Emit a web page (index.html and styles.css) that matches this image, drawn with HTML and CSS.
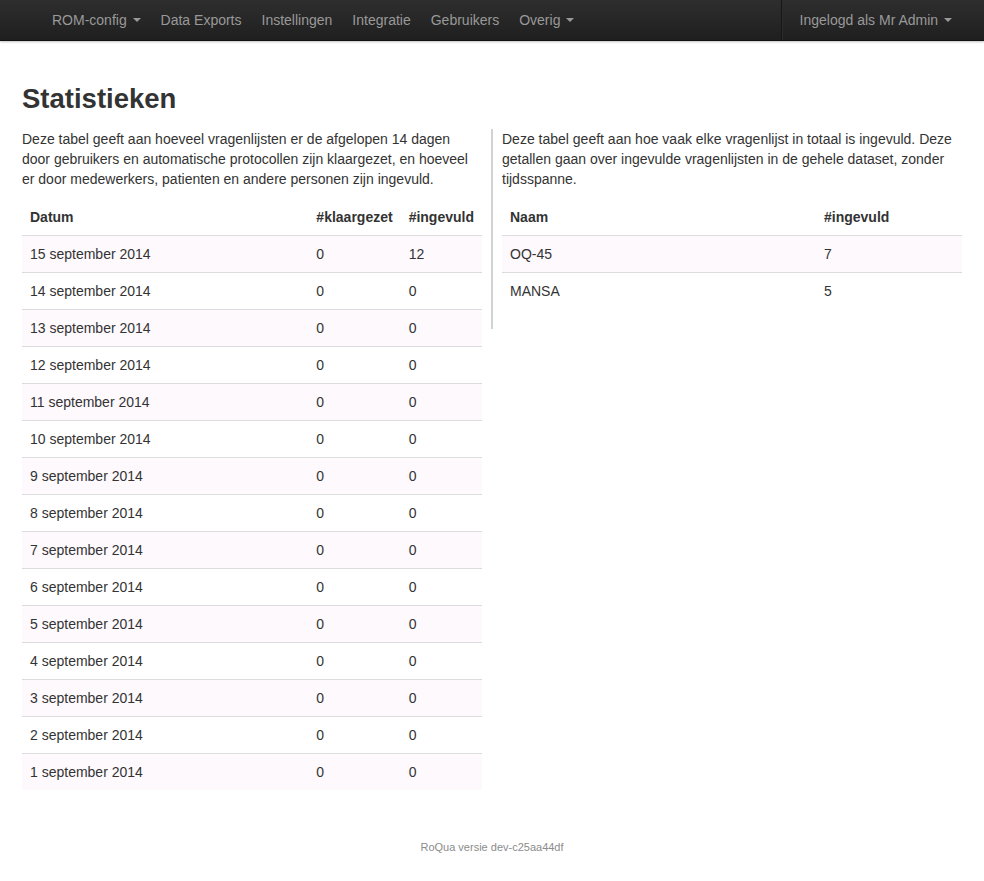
FILE: index.html
```html
<!DOCTYPE html>
<html lang="nl">
<head>
<meta charset="utf-8">
<title>Statistieken</title>
<link rel="stylesheet" href="styles.css">
</head>
<body>
<header class="navbar">
  <ul class="nav">
    <li><a href="#">ROM-config <span class="caret"></span></a></li>
    <li><a href="#">Data Exports</a></li>
    <li><a href="#">Instellingen</a></li>
    <li><a href="#">Integratie</a></li>
    <li><a href="#">Gebruikers</a></li>
    <li><a href="#">Overig <span class="caret"></span></a></li>
  </ul>
  <ul class="nav nav-right">
    <li class="user"><a href="#">Ingelogd als Mr Admin <span class="caret"></span></a></li>
  </ul>
</header>

<main class="main">
  <h1 class="title">Statistieken</h1>
  <div class="columns">
    <section class="col col-left">
      <p class="intro">Deze tabel geeft aan hoeveel vragenlijsten er de afgelopen 14 dagen door gebruikers en automatische protocollen zijn klaargezet, en hoeveel er door medewerkers, patienten en andere personen zijn ingevuld.</p>
      <table class="table">
        <thead>
          <tr><th>Datum</th><th class="shrink">#klaargezet</th><th class="shrink">#ingevuld</th></tr>
        </thead>
        <tbody>
          <tr><td>15 september 2014</td><td>0</td><td>12</td></tr>
          <tr><td>14 september 2014</td><td>0</td><td>0</td></tr>
          <tr><td>13 september 2014</td><td>0</td><td>0</td></tr>
          <tr><td>12 september 2014</td><td>0</td><td>0</td></tr>
          <tr><td>11 september 2014</td><td>0</td><td>0</td></tr>
          <tr><td>10 september 2014</td><td>0</td><td>0</td></tr>
          <tr><td>9 september 2014</td><td>0</td><td>0</td></tr>
          <tr><td>8 september 2014</td><td>0</td><td>0</td></tr>
          <tr><td>7 september 2014</td><td>0</td><td>0</td></tr>
          <tr><td>6 september 2014</td><td>0</td><td>0</td></tr>
          <tr><td>5 september 2014</td><td>0</td><td>0</td></tr>
          <tr><td>4 september 2014</td><td>0</td><td>0</td></tr>
          <tr><td>3 september 2014</td><td>0</td><td>0</td></tr>
          <tr><td>2 september 2014</td><td>0</td><td>0</td></tr>
          <tr><td>1 september 2014</td><td>0</td><td>0</td></tr>
        </tbody>
      </table>
    </section>
    <section class="col col-right">
      <p class="intro">Deze tabel geeft aan hoe vaak elke vragenlijst in totaal is ingevuld. Deze getallen gaan over ingevulde vragenlijsten in de gehele dataset, zonder tijdsspanne.</p>
      <table class="table">
        <thead>
          <tr><th class="name-col">Naam</th><th>#ingevuld</th></tr>
        </thead>
        <tbody>
          <tr><td>OQ-45</td><td>7</td></tr>
          <tr><td>MANSA</td><td>5</td></tr>
        </tbody>
      </table>
    </section>
  </div>
</main>

<footer class="footer">RoQua versie dev-c25aa44df</footer>
</body>
</html>
```
FILE: styles.css
```css
* { box-sizing: border-box; }

html, body {
  margin: 0;
  padding: 0;
}

body {
  font-family: "Liberation Sans", Arial, Helvetica, sans-serif;
  font-size: 14px;
  line-height: 20px;
  color: #333333;
  background: #ffffff;
}

.navbar {
  height: 41px;
  display: flex;
  justify-content: space-between;
  background: linear-gradient(to bottom, #2e2e2e, #1f1f1f);
  border-bottom: 1px solid #111111;
  box-shadow: 0 1px 2px rgba(0, 0, 0, 0.25);
  padding: 0 22px 0 42px;
}

.nav {
  list-style: none;
  margin: 0;
  padding: 0;
  display: flex;
}

.nav a {
  display: block;
  padding: 10px 10px;
  line-height: 20px;
  color: #999999;
  text-decoration: none;
  white-space: nowrap;
}

.nav-right .user {
  border-left: 1px solid #161616;
  box-shadow: inset 1px 0 0 #2c2c2c;
}

.nav-right .user a {
  padding-left: 18px;
}

.caret {
  display: inline-block;
  width: 0;
  height: 0;
  margin-left: 2px;
  vertical-align: top;
  margin-top: 8px;
  border-top: 4px solid #999999;
  border-left: 4px solid transparent;
  border-right: 4px solid transparent;
}

.main {
  padding: 38px 22px 0 22px;
}

.title {
  margin: 0 0 10px 0;
  font-size: 27.5px;
  line-height: 40px;
  font-weight: bold;
  color: #333333;
}

.columns {
  display: grid;
  grid-template-columns: 460px 471px;
  column-gap: 9px;
  align-items: start;
}

.col-left .intro {
  padding-right: 10px;
}

.col-right {
  border-left: 2px solid #d2d2d2;
  padding-left: 9px;
}

.intro {
  margin: 0 0 10px 0;
}

.table {
  width: 100%;
  border-collapse: collapse;
  border-spacing: 0;
  margin-bottom: 20px;
}

.table th,
.table td {
  padding: 8px;
  line-height: 20px;
  text-align: left;
  vertical-align: top;
}

.table th {
  font-weight: bold;
}

.table td {
  border-top: 1px solid #dddddd;
}

.table tbody tr:nth-child(odd) td {
  background: #fdf9fd;
}

.table .shrink {
  width: 1%;
  white-space: nowrap;
}

.table .name-col {
  width: 314px;
}

.footer {
  text-align: center;
  font-size: 11px;
  line-height: 16px;
  color: #8c8c8c;
  padding: 29px 0 20px 0;
}
```
